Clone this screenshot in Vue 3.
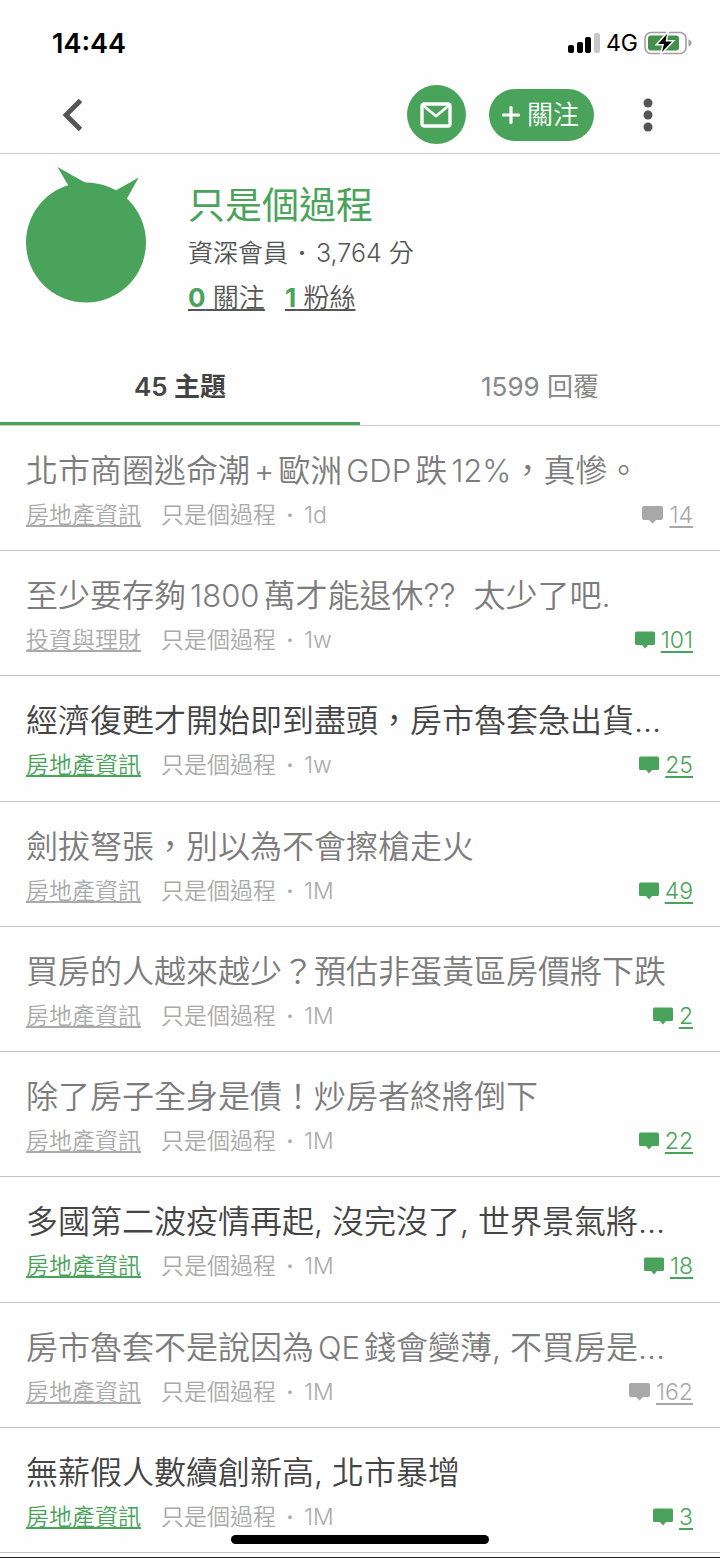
<script setup>
const topics = [
  { title: ['北市商圈逃命潮', '+', '歐洲', 'GDP', '跌', '12%', '，真慘。'], board: '房地產資訊', age: '1d', replies: 14, read: true, seen: true },
  { title: ['至少要存夠', '1800', '萬才能退休??  太少了吧.'], board: '投資與理財', age: '1w', replies: 101, read: true },
  { title: ['經濟復甦才開始即到盡頭，房市魯套急出貨…'], board: '房地產資訊', age: '1w', replies: 25 },
  { title: ['劍拔弩張，別以為不會擦槍走火'], board: '房地產資訊', age: '1M', replies: 49, read: true },
  { title: ['買房的人越來越少？預估非蛋黃區房價將下跌'], board: '房地產資訊', age: '1M', replies: 2, read: true },
  { title: ['除了房子全身是債！炒房者終將倒下'], board: '房地產資訊', age: '1M', replies: 22, read: true },
  { title: ['多國第二波疫情再起, 沒完沒了, 世界景氣將…'], board: '房地產資訊', age: '1M', replies: 18 },
  { title: ['房市魯套不是說因為', 'QE', '錢會變薄, 不買房是…'], board: '房地產資訊', age: '1M', replies: 162, read: true, seen: true },
  { title: ['無薪假人數續創新高, 北市暴增'], board: '房地產資訊', age: '1M', replies: 3 },
]

// Latin runs sit at odd indexes; no gap is added before full-width punctuation.
const partClass = (title, i) => ({
  latin: i % 2 === 1,
  tight: i % 2 === 1 && /^[，。]/.test(title[i + 1] || ''),
})
</script>

<template>
  <div class="screen">
    <div class="status">
      <span class="time">14:44</span>
      <div class="indicators">
        <svg class="signal" width="32" height="20" viewBox="0 0 32 20" aria-hidden="true">
          <rect x="0" y="12" width="6" height="8" rx="2" />
          <rect x="9" y="9" width="6" height="11" rx="2" />
          <rect x="17" y="4" width="6" height="16" rx="2" />
          <rect x="26" y="0" width="6" height="20" rx="2" fill="#c8c8c8" />
        </svg>
        <span class="network">4G</span>
        <svg width="48" height="26" viewBox="0 0 48 26" aria-hidden="true">
          <rect x="1" y="2.5" width="41" height="21" rx="6" fill="none" stroke="#a0a0a0" stroke-width="1.6" />
          <path d="M44.5 9.5q3 1 3 3.5t-3 3.5z" fill="#a0a0a0" />
          <rect x="4" y="5.5" width="31" height="15" rx="3" fill="#43904a" />
          <path d="M23 4 14 14h6l-2 8L28 11.500h-6.500z" fill="#000" stroke="#fff" stroke-width="3" paint-order="stroke" />
        </svg>
      </div>
    </div>

    <header class="bar">
      <button class="icon-btn back" aria-label="返回">
        <svg width="22" height="34" viewBox="0 0 22 34"><path d="M18.500 2.500 4 17l14.500 14.500" fill="none" stroke="#555" stroke-width="4.800" /></svg>
      </button>
      <button class="mail" aria-label="訊息">
        <svg width="32" height="26" viewBox="0 0 32 26" fill="none" stroke="#fff">
          <rect x="2" y="2" width="28" height="22" rx="2" stroke-width="3.400" />
          <path d="M3 3.500 16 14 29 3.500" stroke-width="2.600" />
        </svg>
      </button>
      <button class="follow">
        <svg width="18" height="18" viewBox="0 0 18 18" aria-hidden="true"><path d="M9 1.500v15M1.500 9h15" stroke="#fff" stroke-width="3.200" stroke-linecap="round" /></svg>
        <span>關注</span>
      </button>
      <button class="icon-btn more" aria-label="更多">
        <svg width="10" height="34" viewBox="0 0 10 34" fill="#555"><circle cx="5" cy="5" r="4.500" /><circle cx="5" cy="17" r="4.500" /><circle cx="5" cy="29" r="4.500" /></svg>
      </button>
    </header>

    <section class="profile">
      <svg class="avatar" width="120" height="136" viewBox="0 0 120 136" aria-hidden="true">
        <circle cx="60" cy="75.500" r="60" />
        <path d="M31.500 0 42 18 46 24 62 16.500 59 15.500z" />
        <path d="M112.700 10.500 89.700 23.500 92 34 100.700 32z" />
      </svg>
      <div class="info">
        <h1>只是個過程</h1>
        <p class="rank"><span>資深會員</span><span class="dot">·</span><span>3,764 分</span></p>
        <p class="counts">
          <a href="#following"><b>0</b> 關注</a>
          <a href="#fans"><b>1</b> 粉絲</a>
        </p>
      </div>
    </section>

    <nav class="tabs">
      <button class="tab active">45 主題</button>
      <button class="tab">1599 回覆</button>
    </nav>

    <main class="list">
      <article v-for="t in topics" :key="t.title[0]" class="topic" :class="{ read: t.read }">
        <h2><span v-for="(part, i) in t.title" :key="i" :class="partClass(t.title, i)">{{ part }}</span></h2>
        <div class="meta">
          <a class="board" href="#board">{{ t.board }}</a>
          <span class="author">只是個過程</span>
          <span class="dot">·</span>
          <span>{{ t.age }}</span>
          <a class="replies" :class="{ seen: t.seen }" href="#replies">
            <svg v-if="t.seen" width="21" height="18" viewBox="0 0 21 18" fill="currentColor" aria-hidden="true"><path d="M2 0h17q2 0 2 2v10q0 2-2 2h-5l-3.500 3.500L7 14H2q-2 0-2-2V2q0-2 2-2z" /></svg>
            <svg v-else width="20" height="18" viewBox="0 0 20 18" fill="currentColor" aria-hidden="true"><path d="M1.500 0.500h17q1.500 0 1.500 1.500v10.500q0 1.500-1.500 1.500h-5.500L10 17.500 7 14h-5.500q-1.500 0-1.500-1.500V2q0-1.500 1.500-1.500z" /></svg>
            <span>{{ t.replies }}</span>
          </a>
        </div>
      </article>
    </main>
    <div class="next"></div>
    <div class="home"></div>
  </div>
</template>

<style>
body {
  margin: 0;
  background: #fefefe;
}
</style>

<style scoped>
.screen {
  --green: #4aa35a;
  position: relative;
  display: flex;
  flex-direction: column;
  min-height: 100vh;
  box-sizing: border-box;
  background: #fefefe;
  color: #444;
  font-family: Inter, "Noto Sans CJK TC", sans-serif;
  font-weight: 350;
}
h1, h2, p {
  margin: 0;
  font-weight: inherit;
}
button {
  margin: 0;
  padding: 0;
  border: 0;
  background: none;
  font: inherit;
  color: inherit;
}
svg {
  display: block;
  flex: none;
}
.status {
  display: flex;
  justify-content: space-between;
  align-items: center;
  height: 76px;
  padding: 10px 28px 0 52px;
  box-sizing: border-box;
  color: #000;
}
.time {
  font-size: 27px;
  font-weight: 600;
}
.indicators {
  display: flex;
  align-items: center;
  gap: 6px;
}
.network {
  font-size: 23px;
  font-weight: 400;
}
.bar {
  display: flex;
  align-items: center;
  height: 78px;
  box-sizing: border-box;
  padding: 0 67px 0 62px;
  border-bottom: 1px solid #ccc;
}
.back {
  margin-right: auto;
}
.mail {
  display: grid;
  place-items: center;
  width: 59px;
  height: 59px;
  border-radius: 50%;
  background: var(--green);
}
.follow {
  display: flex;
  align-items: center;
  gap: 7px;
  height: 52px;
  margin-left: 23px;
  padding: 0 15px 0 13px;
  border-radius: 26px;
  background: var(--green);
  color: #fff;
  font-size: 26px;
  line-height: 52px;
}
.more {
  margin-left: 49px;
}
.profile {
  display: flex;
  gap: 42px;
  padding: 13px 26px 0;
}
.avatar {
  fill: var(--green);
}
.info {
  padding-top: 15px;
}
h1 {
  color: var(--green);
  font-size: 37px;
  font-weight: 400;
  line-height: 48px;
}
.rank {
  display: flex;
  font-size: 25px;
  line-height: 46px;
  color: #555;
}
.rank .dot {
  width: 28px;
  text-align: center;
}
.counts {
  display: flex;
  gap: 20px;
  font-size: 26px;
  line-height: 44px;
}
.counts a {
  color: #555;
  text-underline-offset: 2px;
  text-decoration-skip-ink: none;
}
.counts b {
  color: var(--green);
  font-weight: 700;
}
.dot {
  font-weight: 600;
}
.tabs {
  display: flex;
  margin-top: 28px;
  border-bottom: 1px solid #ccc;
}
.tab {
  flex: 1;
  height: 77px;
  box-sizing: border-box;
  padding-bottom: 2px;
  border-bottom: 3px solid transparent;
  font-size: 26px;
  font-weight: 400;
  color: #888;
}
.tab.active {
  border-color: var(--green);
  font-weight: 600;
  color: #444;
}
.list {
  flex: 1;
  display: flex;
  flex-direction: column;
}
.topic {
  flex: 1;
  box-sizing: border-box;
  padding: 21px 27px 12px 26px;
  border-bottom: 1px solid #c4c4c4;
}
h2 {
  font-size: 32px;
  line-height: 48px;
  white-space: pre;
  overflow: hidden;
}
.latin {
  margin: 0 4px;
  font-size: 31px;
  line-height: 31px;
}
.tight {
  margin-right: 0;
}
.read h2 {
  color: #7c7c7c;
}
.meta {
  display: flex;
  align-items: center;
  font-size: 23px;
  line-height: 40px;
  color: #aaa;
}
.board {
  margin-right: 20px;
  color: var(--green);
  text-underline-offset: 2px;
  text-decoration-skip-ink: none;
}
.read .board {
  color: #aaa;
}
.meta .dot {
  width: 28px;
  text-align: center;
}
.replies {
  display: flex;
  align-items: center;
  gap: 6px;
  margin-left: auto;
  color: var(--green);
  text-decoration: none;
}
.replies span {
  text-decoration: underline;
  text-underline-offset: 3px;
}
.replies.seen {
  color: #a8a8a8;
}
.next {
  height: 5px;
  box-sizing: border-box;
  border-bottom: 1px solid #222;
}
.home {
  position: absolute;
  left: 50%;
  bottom: 14px;
  width: 258px;
  height: 9px;
  margin-left: -129px;
  border-radius: 5px;
  background: #000;
}
</style>
